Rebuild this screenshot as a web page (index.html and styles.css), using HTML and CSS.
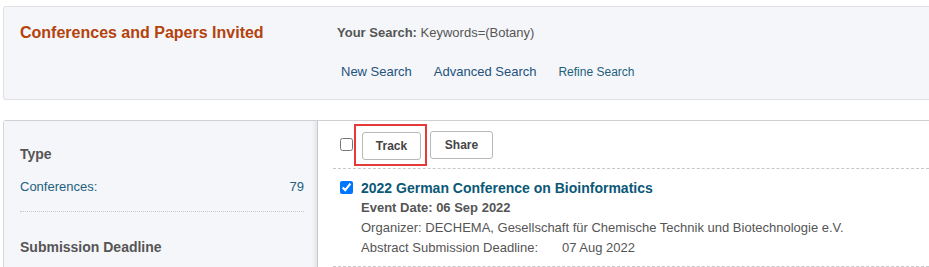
FILE: index.html
```html
<!DOCTYPE html>
<html>

<head>
    <meta charset="utf-8">
    <title>Conferences and Papers Invited</title>
    <link rel="stylesheet" href="styles.css">
</head>

<body>
    <div class="page">
        <div class="searchHeader">
            <h1 class="pageTitle">Conferences and Papers Invited</h1>
            <div class="searchInfo">
                <div class="yourSearch"><b>Your Search:</b> Keywords=(Botany)</div>
                <div class="searchLinks">
                    <a href="#" class="navLink">New Search</a>
                    <a href="#" class="navLink">Advanced Search</a>
                    <a href="#" class="navLink refine">Refine Search</a>
                </div>
            </div>
        </div>

        <div class="resultsPanel">
            <div class="sidebar">
                <div class="facet">
                    <h2 class="facetTitle">Type</h2>
                    <div class="facetRow">
                        <a href="#" class="facetLink">Conferences:</a>
                        <span class="facetCount">79</span>
                    </div>
                </div>
                <div class="facet">
                    <h2 class="facetTitle">Submission Deadline</h2>
                </div>
            </div>

            <div class="results">
                <div class="toolbar">
                    <input type="checkbox" class="selectAll">
                    <span class="highlight"><button class="button trackBut">Track</button></span>
                    <button class="button shareBut">Share</button>
                </div>

                <div class="resultItem">
                    <input type="checkbox" class="itemCheck" checked>
                    <div class="itemBody">
                        <a href="#" class="itemTitle">2022 German Conference on Bioinformatics</a>
                        <div class="eventDate">Event Date: 06 Sep 2022</div>
                        <div class="itemLine">Organizer: DECHEMA, Gesellschaft für Chemische Technik und Biotechnologie e.V.</div>
                        <div class="itemLine"><span class="lineLabel">Abstract Submission Deadline:</span>07 Aug 2022</div>
                    </div>
                </div>
            </div>
        </div>
    </div>
</body>

</html>
```

FILE: styles.css
```css
body {
    margin: 0;
    font-family: "Liberation Sans", Arial, Helvetica, sans-serif;
    font-size: 13px;
    color: #555;
    background-color: white;
}

a {
    text-decoration: none;
}

.page {
    padding: 6px 0 0 3px;
}

.searchHeader {
    display: flex;
    height: 92px;
    background-color: #f5f6fa;
    border: 1px solid #dfe1e4;
    border-right: none;
    border-radius: 3px 0 0 3px;
}

.pageTitle {
    margin: 0;
    width: 333px;
    flex-shrink: 0;
    padding: 17px 0 0 16px;
    box-sizing: border-box;
    font-size: 16px;
    font-weight: bold;
    color: #b4420c;
}

.searchInfo {
    padding-top: 18px;
}

.yourSearch {
    color: #555;
    line-height: 16px;
}

.searchLinks {
    display: flex;
    align-items: baseline;
    gap: 22px;
    margin-top: 23px;
    padding-left: 4px;
}

.navLink {
    color: #24527a;
    font-size: 13px;
}

.navLink.refine {
    color: #1f5f7a;
    font-size: 12px;
}

.resultsPanel {
    display: flex;
    margin-top: 20px;
    border-top: 1px solid #d0d0d0;
    border-left: 1px solid #d6d6d6;
    border-radius: 3px 0 0 0;
    height: 160px;
}

.sidebar {
    flex-shrink: 0;
    width: 284px;
    background-color: #f5f6fa;
    box-shadow: inset -4px 0 4px -2px #e2e3e6;
    border-right: 1px solid #c9c9c9;
    padding: 0 13px 0 16px;
}

.facet {
    padding-top: 24px;
}

.facet + .facet {
    padding-top: 26px;
}

.facetTitle {
    margin: 0;
    font-size: 14px;
    font-weight: bold;
    color: #555;
    line-height: 18px;
}

.facetRow {
    display: flex;
    justify-content: space-between;
    margin-top: 16px;
    padding-bottom: 16px;
    border-bottom: 1px dotted #c8c8c8;
    line-height: 16px;
}

.facetLink,
.facetCount {
    color: #24607f;
}

.results {
    flex: 1;
    padding-left: 15px;
}

.toolbar {
    display: flex;
    align-items: center;
    height: 47px;
    border-bottom: 1px dashed #c8c8c8;
}

.selectAll {
    margin: 0 1px 0 7px;
    width: 13px;
    height: 13px;
}

.highlight {
    display: flex;
    border: 2px solid #e53a3a;
    padding: 6px 4px 4px 6px;
    margin-right: 3px;
}

.button {
    font-family: "Liberation Sans", Arial, Helvetica, sans-serif;
    font-size: 12px;
    font-weight: bold;
    color: #444;
    background-color: white;
    border: 1px solid #b8b8b8;
    border-radius: 3px;
    height: 28px;
    cursor: pointer;
}

.trackBut {
    width: 59px;
}

.shareBut {
    width: 63px;
}

.resultItem {
    display: flex;
    padding-top: 9px;
    height: 88px;
    border-bottom: 1px dashed #c8c8c8;
}

.itemCheck {
    margin: 3px 8px 0 7px;
    width: 13px;
    height: 13px;
}

.itemBody {
    line-height: 20px;
}

.itemTitle {
    display: block;
    font-size: 14px;
    font-weight: bold;
    color: #0b5877;
}

.eventDate {
    font-weight: bold;
    color: #555;
}

.itemLine {
    color: #555;
}

.lineLabel {
    display: inline-block;
    width: 201px;
}
```
